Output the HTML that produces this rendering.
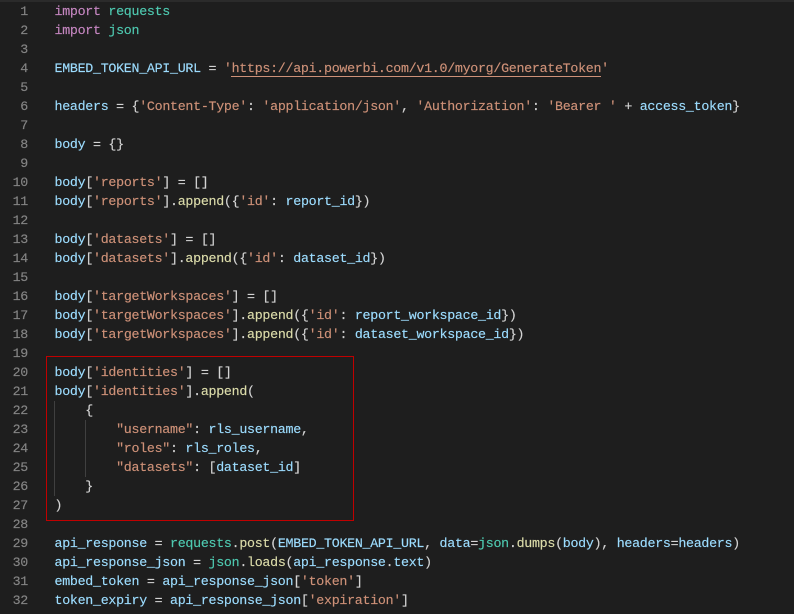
<!DOCTYPE html>
<html><head><meta charset="utf-8"><style>
html,body{margin:0;padding:0;width:794px;height:614px;overflow:hidden;background:#1e1e1e}
#top{position:absolute;left:0;top:0;width:794px;height:2px;background:#2b2b2b}
pre{margin:0;position:absolute;font-family:"Liberation Mono",monospace;font-size:13.3px;letter-spacing:-0.28px;line-height:19px;top:2px;font-weight:normal;-webkit-text-stroke:0.15px currentColor}
#n{left:0;width:28px;text-align:right;color:#858585}
#c{left:54.5px;color:#d4d4d4}
.k{color:#c586c0}.m{color:#4ec9b0}.v{color:#9cdcfe}.s{color:#ce9178}.f{color:#dcdcaa}
.g{position:absolute;width:1px;background:#404040}
#box{position:absolute;left:46px;top:356px;width:306px;height:163px;border:1px solid #c00000}
#u{position:absolute;left:231px;top:76px;width:370px;height:1px;background:#ce9178}
</style></head><body>
<div id="top"></div>
<div class="g" style="left:54px;top:401px;height:95px"></div>
<div class="g" style="left:85px;top:420px;height:57px"></div>
<pre id="n">1
2
3
4
5
6
7
8
9
10
11
12
13
14
15
16
17
18
19
20
21
22
23
24
25
26
27
28
29
30
31
32</pre>
<pre id="c"><span class="k">import</span> <span class="m">requests</span>
<span class="k">import</span> <span class="m">json</span>

<span class="v">EMBED_TOKEN_API_URL</span> = <span class="s">'https://api.powerbi.com/v1.0/myorg/GenerateToken'</span>

<span class="v">headers</span> = {<span class="s">'Content-Type'</span>: <span class="s">'application/json'</span>, <span class="s">'Authorization'</span>: <span class="s">'Bearer '</span> + <span class="v">access_token</span>}

<span class="v">body</span> = {}

<span class="v">body</span>[<span class="s">'reports'</span>] = []
<span class="v">body</span>[<span class="s">'reports'</span>].<span class="f">append</span>({<span class="s">'id'</span>: <span class="v">report_id</span>})

<span class="v">body</span>[<span class="s">'datasets'</span>] = []
<span class="v">body</span>[<span class="s">'datasets'</span>].<span class="f">append</span>({<span class="s">'id'</span>: <span class="v">dataset_id</span>})

<span class="v">body</span>[<span class="s">'targetWorkspaces'</span>] = []
<span class="v">body</span>[<span class="s">'targetWorkspaces'</span>].<span class="f">append</span>({<span class="s">'id'</span>: <span class="v">report_workspace_id</span>})
<span class="v">body</span>[<span class="s">'targetWorkspaces'</span>].<span class="f">append</span>({<span class="s">'id'</span>: <span class="v">dataset_workspace_id</span>})

<span class="v">body</span>[<span class="s">'identities'</span>] = []
<span class="v">body</span>[<span class="s">'identities'</span>].<span class="f">append</span>(
    {
        <span class="s">"username"</span>: <span class="v">rls_username</span>,
        <span class="s">"roles"</span>: <span class="v">rls_roles</span>,
        <span class="s">"datasets"</span>: [<span class="v">dataset_id</span>]
    }
)

<span class="v">api_response</span> = <span class="m">requests</span>.<span class="f">post</span>(<span class="v">EMBED_TOKEN_API_URL</span>, <span class="v">data</span>=<span class="m">json</span>.<span class="f">dumps</span>(<span class="v">body</span>), <span class="v">headers</span>=<span class="v">headers</span>)
<span class="v">api_response_json</span> = <span class="m">json</span>.<span class="f">loads</span>(<span class="v">api_response</span>.<span class="v">text</span>)
<span class="v">embed_token</span> = <span class="v">api_response_json</span>[<span class="s">'token'</span>]
<span class="v">token_expiry</span> = <span class="v">api_response_json</span>[<span class="s">'expiration'</span>]</pre>
<div id="u"></div>
<div id="box"></div>
</body></html>
